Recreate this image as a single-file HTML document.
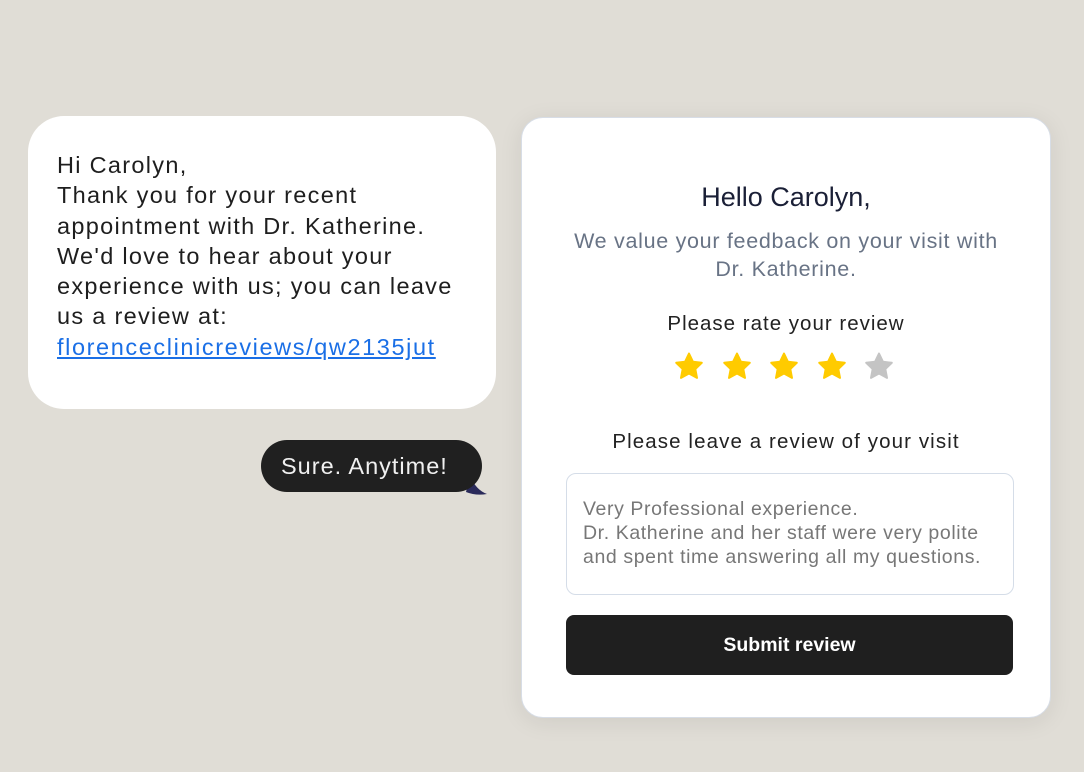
<!DOCTYPE html>
<html><head><meta charset="utf-8"><style>
*{margin:0;padding:0;box-sizing:border-box}
body{width:1084px;height:772px;background:#e0ddd6;font-family:"Liberation Sans",sans-serif;position:relative;overflow:hidden}
.a{position:absolute}
.b1{left:28px;top:116px;width:468px;height:293px;background:#fff;border-radius:36px}
.b1 p{position:absolute;left:29px;top:34px;font-size:23.5px;letter-spacing:1.3px;line-height:30.3px;color:#1e1e1e;width:440px;white-space:nowrap}
.b1 a{color:#1a6fe6;text-decoration:underline;letter-spacing:1.6px}
.b2{left:261px;top:440px;width:221px;height:52px;background:#202020;border-radius:26px;color:#f0f0f0;font-size:23.5px;letter-spacing:1px;line-height:52px;padding-left:20px;white-space:nowrap}
.card{left:521px;top:117px;width:530px;height:601px;background:#fff;border:1.5px solid #d7dde6;border-radius:22px;box-shadow:0 4px 24px rgba(0,0,0,.08)}
.c{position:absolute;left:0;width:100%;text-align:center;white-space:nowrap}
.ta{left:44px;top:355px;width:448px;height:122px;border:1.5px solid #d5dde8;border-radius:10px;padding:23px 16px;font-size:19.5px;letter-spacing:0.6px;line-height:24px;color:#777;white-space:nowrap}
.btn{left:44px;top:497px;width:447px;height:60px;background:#1f1f1f;border-radius:8px;color:#fff;font-weight:bold;font-size:19.5px;text-align:center;line-height:60px}
</style></head><body>
<div class="a b1"><p>Hi Carolyn,<br>Thank you for your recent<br>appointment with Dr. Katherine.<br>We'd love to hear about your<br>experience with us; you can leave<br>us a review at:<br><a>florenceclinicreviews/qw2135jut</a></p></div>
<svg class="a" style="left:462px;top:474px" width="28" height="24"><path d="M8 2 Q14 16 25 20 Q14 22 4 18Z" fill="#2a2a5a"/></svg>
<div class="a b2">Sure. Anytime!</div>
<div class="a card">
<div class="c" style="top:64px;font-size:27px;color:#1a1f36">Hello Carolyn,</div>
<div class="c" style="top:109px;font-size:21.5px;letter-spacing:0.7px;line-height:28px;color:#687385">We value your feedback on your visit with<br>Dr. Katherine.</div>
<div class="c" style="top:194px;font-size:20.5px;letter-spacing:1px;color:#222">Please rate your review</div>
<svg class="a" style="left:150px;top:234px" width="230" height="32" viewBox="0 0 230 32">
<defs><path id="s" d="M14 1.5l3.9 8.2 8.9 1.1-6.5 6.2 1.7 8.9L14 21.5l-8 4.4 1.7-8.9-6.5-6.2 8.9-1.1z" stroke-linejoin="round" stroke-width="2"/></defs>
<use href="#s" x="3" fill="#ffcb00" stroke="#ffcb00"/><use href="#s" x="51" fill="#ffcb00" stroke="#ffcb00"/><use href="#s" x="98" fill="#ffcb00" stroke="#ffcb00"/><use href="#s" x="146" fill="#ffcb00" stroke="#ffcb00"/><use href="#s" x="193" fill="#c4c4c4" stroke="#c4c4c4"/>
</svg>
<div class="c" style="top:312px;font-size:20.5px;letter-spacing:1.1px;color:#222">Please leave a review of your visit</div>
<div class="a ta">Very Professional experience.<br>Dr. Katherine and her staff were very polite<br>and spent time answering all my questions.</div>
<div class="a btn">Submit review</div>
</div>
</body></html>
